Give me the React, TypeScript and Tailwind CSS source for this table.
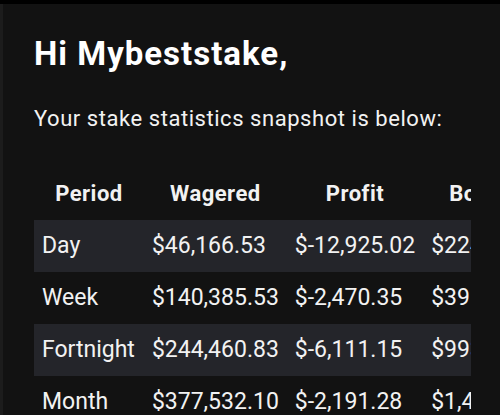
const rows = [
  { period: 'Day', wagered: '$46,166.53', profit: '$-12,925.02', bonus: '$224.18' },
  { period: 'Week', wagered: '$140,385.53', profit: '$-2,470.35', bonus: '$391.07' },
  { period: 'Fortnight', wagered: '$244,460.83', profit: '$-6,111.15', bonus: '$993.40' },
  { period: 'Month', wagered: '$377,532.10', profit: '$-2,191.28', bonus: '$1,428.66' },
]

export default function App() {
  return (
    <div className="min-h-[415px] h-[415px] overflow-hidden bg-black pt-1 font-['Roboto',sans-serif] text-[#f2f2f2]">
      <div className="h-full border-l-[3px] border-[#1c1c1c] bg-[#121212] pl-[31px] pr-[29px] pt-[30px]">
        <h1 className="text-[33px] leading-[40px] font-bold tracking-[1px] text-white">Hi Mybeststake,</h1>
        <p className="mt-[31px] text-[22px] leading-[28px] tracking-[0.55px]">Your stake statistics snapshot is below:</p>

        {/* table is wider than the frame, clipped on the right */}
        <div className="mt-[35px] overflow-hidden">
          <table className="border-collapse whitespace-nowrap">
            <thead>
              <tr className="h-[52px] text-[22px] leading-[28px] font-bold tracking-[0.5px]">
                <th className="px-[8px] text-center">Period</th>
                <th className="px-[8px] text-center">Wagered</th>
                <th className="px-[8px] text-center">Profit</th>
                <th className="px-[8px] text-center">Bonus</th>
              </tr>
            </thead>
            <tbody>
              {rows.map((r, idx) => (
                <tr key={r.period} className={`h-[52px] text-[23px] leading-[28px] ${idx % 2 === 0 ? 'bg-[#24252a]' : ''}`}>
                  <td className="pl-[8px] pr-[9px]">{r.period}</td>
                  <td className="px-[8px]">{r.wagered}</td>
                  <td className="px-[8px]">{r.profit}</td>
                  <td className="px-[8px]">{r.bonus}</td>
                </tr>
              ))}
            </tbody>
          </table>
        </div>
      </div>
    </div>
  )
}
